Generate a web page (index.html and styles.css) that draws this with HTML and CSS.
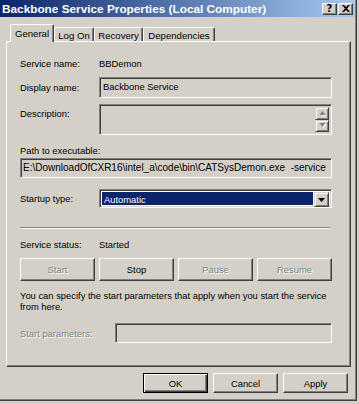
FILE: index.html
```html
<!DOCTYPE html>
<html>
<head>
<meta charset="utf-8">
<link rel="stylesheet" href="styles.css">
</head>
<body>
<div class="window">
  <div class="titlebar">
    <span class="title">Backbone Service Properties (Local Computer)</span>
    <div class="tbtns">
      <span class="tbtn help">?</span>
      <span class="tbtn"><svg width="8" height="7" viewBox="0 0 8 7"><path d="M0 0h2l2 2 2-2h2L5 3.5 8 7H6L4 5 2 7H0l3-3.5z" fill="#000"/></svg></span>
    </div>
  </div>
  <div class="tabs">
    <div class="tab active">General</div>
    <div class="tab t-logon">Log On</div>
    <div class="tab t-recovery">Recovery</div>
    <div class="tab t-dep">Dependencies</div>
  </div>
  <div class="panel">
    <div class="row r-name"><span class="label">Service name:</span><span>BBDemon</span></div>
    <div class="row r-display"><span class="label">Display name:</span><div class="field display">Backbone Service</div></div>
    <div class="row r-desc"><span class="label desc-label">Description:</span>
      <div class="field desc">
        <div class="vscroll">
          <span class="sbtn"><svg width="7" height="5" viewBox="0 0 7 5"><path d="M3.5 1 6 4H1z" fill="#fff" transform="translate(1 1)"/><path d="M3.5 0 6.5 4H.5z" fill="#808080"/></svg></span>
          <span class="sbtn"><svg width="7" height="5" viewBox="0 0 7 5"><path d="M.5 1h6L3.5 5z" fill="#fff" transform="translate(1 0)"/><path d="M.5 0h6L3.5 4z" fill="#808080"/></svg></span>
        </div>
      </div>
    </div>
    <div class="plabel">Path to executable:</div>
    <div class="field path">E:\DownloadOfCXR16\intel_a\code\bin\CATSysDemon.exe&nbsp; -service</div>
    <div class="row r-startup"><span class="label">Startup type:</span>
      <div class="select"><span class="sel">Automatic</span><span class="dd"><svg width="7" height="4" viewBox="0 0 7 4"><path d="M0 0h7L3.5 4z" fill="#000"/></svg></span></div>
    </div>
    <div class="sep"></div>
    <div class="row r-status"><span class="label">Service status:</span><span>Started</span></div>
    <div class="btnrow">
      <button class="btn" disabled>Start</button>
      <button class="btn">Stop</button>
      <button class="btn" disabled>Pause</button>
      <button class="btn" disabled>Resume</button>
    </div>
    <p class="note">You can specify the start parameters that apply when you start the service<br>from here.</p>
    <div class="row r-params"><span class="label dim">Start parameters:</span><div class="field params"></div></div>
  </div>
  <div class="footer">
    <button class="btn fbtn default">OK</button>
    <button class="btn fbtn">Cancel</button>
    <button class="btn fbtn">Apply</button>
  </div>
</div>
</body>
</html>
```
FILE: styles.css
```css
* { box-sizing: border-box; }
html, body { margin: 0; padding: 0; }
body {
  width: 359px; height: 404px; overflow: hidden;
  background: #d4d0c8;
  font-family: "Liberation Sans", Arial, sans-serif;
  font-size: 9.4px; color: #000;
}
.window {
  width: 357px; height: 401px;
  background: #d4d0c8;
  border-right: 1px solid #404040;
  border-bottom: 1px solid #404040;
  box-shadow: inset -1px -1px 0 #808080;
}
.titlebar {
  height: 17px; margin-right: 1px;
  background: linear-gradient(to right, #0a246a, #a6caf0);
  display: flex; align-items: center; justify-content: space-between;
  padding: 0 2px 0 2px;
}
.title { color: #fff; font-weight: bold; font-size: 11.8px; }
.tbtns { display: flex; gap: 1px; }
.tbtn {
  width: 15px; height: 12px;
  background: #d4d0c8;
  border: 1px solid; border-color: #fff #404040 #404040 #fff;
  box-shadow: inset -1px -1px 0 #808080;
  display: flex; align-items: center; justify-content: center;
}
.help { font: bold 10px "DejaVu Sans", sans-serif; line-height: 1; }
.tabs {
  display: flex; align-items: flex-end;
  height: 24px; padding-left: 10px;
  font-size: 9.6px;
}
.tab {
  height: 14px;
  border: 1px solid; border-bottom: none;
  border-color: #fff #404040 #fff #fff;
  box-shadow: inset -1px 0 0 #808080;
  border-radius: 2px 2px 0 0;
  display: flex; align-items: center; justify-content: center;
  padding-top: 1px;
}
.tab.active {
  width: 44px; height: 18px; margin-bottom: -1px;
  position: relative; z-index: 1;
  background: #d4d0c8;
  padding-bottom: 2px;
}
.t-logon { width: 40px; }
.t-recovery { width: 49px; }
.t-dep { width: 72px; }
.panel {
  margin-left: 6px; width: 345px; height: 326px;
  border: 1px solid; border-color: #fff #404040 #404040 #fff;
  box-shadow: inset -1px -1px 0 #808080;
  padding: 0 0 0 13px;
}
.row { display: flex; align-items: center; }
.label { width: 79px; flex: none; }
.r-name { margin-top: 15px; height: 13px; }
.r-display { margin-top: 7px; }
.field {
  border: 1px solid; border-color: #808080 #fff #fff #808080;
  box-shadow: inset 1px 1px 0 #404040, inset -1px -1px 0 #d4d0c8;
  background: #d4d0c8;
}
.display { width: 233px; height: 21px; padding: 3px 0 0 3px; }
.r-desc { margin-top: 6px; align-items: flex-start; }
.desc-label { padding-top: 4px; }
.desc { width: 233px; height: 31px; display: flex; justify-content: flex-end; padding: 2px; }
.vscroll { width: 14px; display: flex; flex-direction: column; justify-content: space-between; }
.sbtn {
  height: 13px; width: 14px;
  border: 1px solid; border-color: #d4d0c8 #404040 #404040 #d4d0c8;
  box-shadow: inset 1px 1px 0 #fff, inset -1px -1px 0 #808080;
  display: flex; align-items: center; justify-content: center;
}
.plabel { margin-top: 9px; height: 13px; line-height: 13px; }
.path { margin-top: 1px; width: 312px; height: 20px; padding: 3px 0 0 2px; white-space: nowrap; font-size: 10px; }
.r-startup { margin-top: 11px; }
.select {
  width: 233px; height: 19px;
  border: 1px solid; border-color: #808080 #fff #fff #808080;
  box-shadow: inset 1px 1px 0 #404040, inset -1px -1px 0 #d4d0c8;
  background: #fff;
  display: flex; padding: 2px;
}
.sel {
  flex: 1; background: #0a246a; color: #fff;
  padding-left: 2px; line-height: 15px; margin-right: 1px;
}
.dd {
  width: 15px; height: 15px;
  background: #d4d0c8;
  border: 1px solid; border-color: #d4d0c8 #404040 #404040 #d4d0c8;
  box-shadow: inset 1px 1px 0 #fff, inset -1px -1px 0 #808080;
  display: flex; align-items: center; justify-content: center;
}
.sep {
  margin-top: 19px; width: 310px; height: 2px;
  border-top: 1px solid #808080; border-bottom: 1px solid #fff;
}
.r-status { margin-top: 9px; height: 13px; }
.btnrow { margin-top: 7px; display: flex; gap: 4px; }
.btn {
  width: 75px; height: 23px;
  background: #d4d0c8;
  border: 1px solid; border-color: #fff #404040 #404040 #fff;
  box-shadow: inset -1px -1px 0 #808080;
  font: inherit; color: #000; padding: 0;
}
.btn:disabled { color: #808080; text-shadow: 1px 1px 0 #fff; }
.note { margin: 9px 0 0 0; line-height: 11px; }
.r-params { margin-top: 11px; }
.dim { color: #808080; text-shadow: 1px 1px 0 #fff; width: 95px; }
.params { width: 217px; height: 20px; }
.footer {
  margin-top: 6px; display: flex; justify-content: flex-end; gap: 5px;
  padding-right: 8px;
}
.fbtn { width: 65px; height: 20px; }
.default {
  border-color: #000;
  box-shadow: inset 1px 1px 0 #fff, inset -1px -1px 0 #404040, inset -2px -2px 0 #808080;
}
```
